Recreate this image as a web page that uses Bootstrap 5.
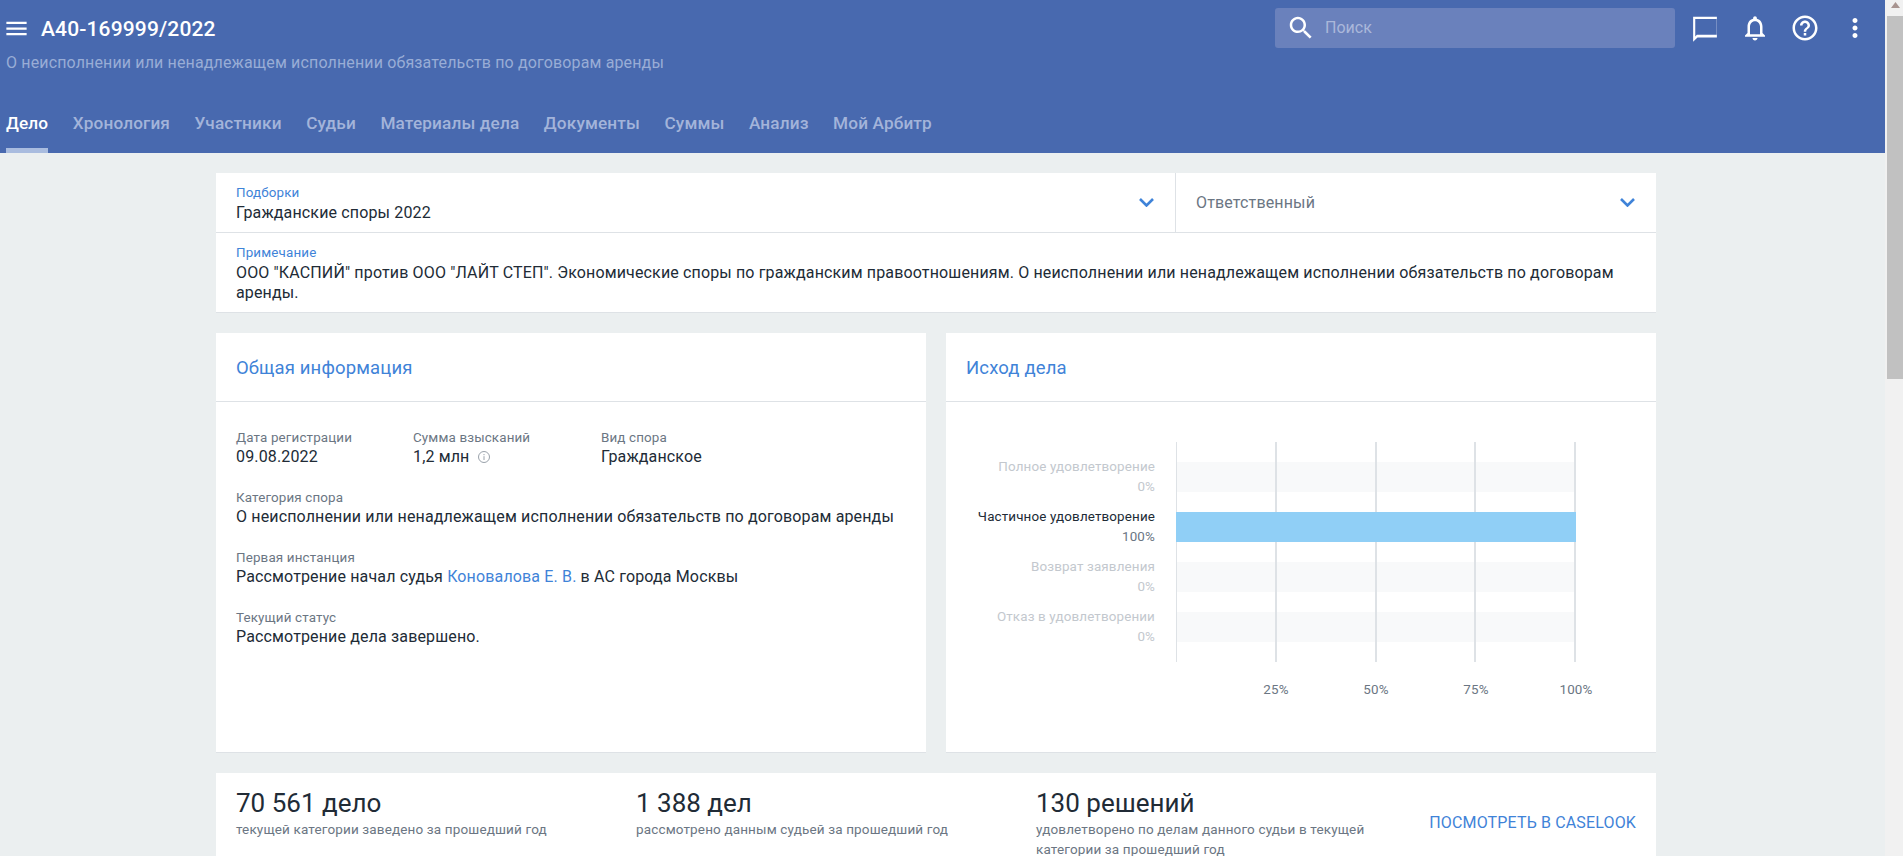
<!DOCTYPE html>
<html lang="ru">
<head>
<meta charset="utf-8">
<title>А40-169999/2022</title>
<link href="https://cdn.jsdelivr.net/npm/bootstrap@5.3.0/dist/css/bootstrap.min.css" rel="stylesheet">
<style>
html,body{height:856px;overflow:hidden}
body{font-family:Roboto,"Noto Sans",sans-serif;background:#ebeff0;color:#212b36;font-size:16px;line-height:20px;letter-spacing:.009em}
.viewport{height:856px}
.page{flex:1 1 0;min-width:0;overflow:hidden}
.fake-bar{width:18px;background:#f1f1f1;flex:none}
.bar-arrow{height:14px}
.bar-arrow svg{display:block;margin:2px 0 0 6px}
.bar-thumb{height:363px;margin-left:2px;background:#c1c1c1}
.hdr{height:153px;background:#4869af;color:#fff}
.hdr-top{padding-top:8px;height:48px}
.menu-ico{margin:0 11px 0 3px;width:27px;height:27px;fill:#fff;flex:none}
.case-no{font-size:21px;font-weight:500;line-height:28px;margin:1px 0 0}
.srch{width:400px;height:40px;background:#6a81bc;border-radius:3px;padding-left:11px;margin-right:5px;color:#aab8da;font-size:16px}
.srch svg{width:30px;height:30px;fill:#fff;margin-right:9px}
.srch-input{background:transparent;border:0;outline:0;padding:0;color:#fff;font:inherit;flex:1;min-width:0}
.srch-input::placeholder{color:#aab8da;opacity:1}
.ico-btn{width:50px;height:40px;background:none;border:0;padding:0;display:flex;align-items:center;justify-content:center}
.ico-btn svg{width:30px;height:30px;fill:#fff}
.hdr-right{margin-right:5px}
.sub{margin:5px 0 0 6px;line-height:20px;color:#99add6}
.tabs{margin-top:auto;padding-left:6px;gap:24.500px}
.tab{display:block;font-size:17.200px;font-weight:500;line-height:24px;color:#a3b4da;padding-bottom:13px;border-bottom:5px solid transparent;text-decoration:none}
.tab.on{color:#fff;border-bottom-color:#a9bcdf}
.wrap{width:1440px;margin-left:216px;padding-top:20px}
.panel{background:#fff;border:0;border-radius:0;border-bottom:1px solid #dee2e6}
.pick{height:60px;border-bottom:1px solid #dee2e6}
.pick-a{flex:1 1 0;padding:9px 20px}
.pick-a .blue-lbl{line-height:21px}
.pick-b{width:481px;border-left:1px solid #dee2e6;padding:0 20px;color:#6b7683}
.pick-a,.pick-b{display:flex;align-items:center;justify-content:space-between}
.chev{width:15px;height:9px;fill:none;stroke:#3f83d8;stroke-width:2.6;flex:none;margin-right:1px}
.blue-lbl{font-size:13.400px;line-height:20px;color:#3f83d8}
.note{padding:9px 20px 9px}
.note .blue-lbl{line-height:21px}
.pair{--bs-gutter-x:20px;margin-top:20px}
.tall{height:420px}
.panel-h{height:69px;line-height:70px;padding:0 20px;border-bottom:1px solid #dee2e6;color:#3f83d8;font-size:18.500px;font-weight:400;margin:0}
.info{padding:27px 20px 0}
.lbl{font-size:13.400px;line-height:18px;color:#6b7683}
.infoblock{margin-bottom:22px}
.c1{width:177px}
.c2{width:188px}
.i-ico{width:14px;height:14px;margin-left:8px;vertical-align:-2px}
.info a,.link-blue{color:#3f83d8;text-decoration:none}
.chart{padding:40px 0 0 20px;font-size:13.400px}
.chart-grid{display:flex}
.names{width:189px;padding-top:14.500px;text-align:right}
.name-row{height:50px;line-height:20px;white-space:nowrap;color:#c3c8ce}
.name-row.act{color:#212b36}
.name-row.act .pc{color:#6b7683}
.plot{width:400px;height:220px;margin-left:21px;position:relative;border-left:1px solid #dee2e6;padding-top:20px;flex:none}
.band{height:30px;margin-bottom:20px;background:#f8f9fa}
.band.fill{background:#90cff6;position:relative;z-index:2;margin-left:-1px}
.grid-over{position:absolute;inset:0;display:grid;grid-template-columns:repeat(4,1fr)}
.grid-over i{border-right:2px solid #dee2e6;display:block}
.ticks{display:grid;grid-template-columns:repeat(4,100px);margin:18px 0 0 210px;color:#6b7683;text-align:center}
.ticks span{display:block;transform:translateX(50%)}
.stat{margin-top:20px;height:120px;padding:15px 20px 0}
.stat-col{width:400px;flex:none}
.stat-col.last{width:393px}
.num{font-size:26px;line-height:30px;margin:0;font-weight:400;letter-spacing:0}
.cap{font-size:13.500px;line-height:20px;color:#6b7683;margin:1px 0 0;width:340px}
.more{font-size:16px;color:#3f83d8;margin-left:auto;margin-top:25px;text-decoration:none;white-space:nowrap}
</style>
</head>
<body>
<div class="viewport d-flex">
<div class="page">
  <header class="hdr d-flex flex-column">
    <div class="hdr-top d-flex align-items-center">
      <svg class="menu-ico" viewBox="0 0 24 24"><path d="M3 18h18v-2H3v2zm0-5h18v-2H3v2zm0-7v2h18V6H3z"/></svg>
      <h1 class="case-no">А40-169999/2022</h1>
      <div class="hdr-right ms-auto d-flex align-items-center">
        <div class="srch d-flex align-items-center">
          <svg viewBox="0 0 24 24"><path d="M15.500 14h-.79l-.28-.27C15.410 12.590 16 11.110 16 9.500 16 5.910 13.090 3 9.500 3S3 5.910 3 9.500 5.910 16 9.500 16c1.610 0 3.090-.59 4.230-1.570l.27.28v.79l5 4.990L20.490 19l-4.990-5zm-6 0C7.010 14 5 11.990 5 9.500S7.010 5 9.500 5 14 7.010 14 9.500 11.990 14 9.500 14z"/></svg>
          <input class="srch-input" type="text" placeholder="Поиск">
        </div>
        <button class="ico-btn" type="button" aria-label="Чат"><svg viewBox="0 0 24 24"><path fill-rule="evenodd" d="M2.500 3h19v16.500H6L2.500 23V3zm1.700 1.700v14l1.300-1.300h15.800V4.700H4.200z"/></svg></button>
        <button class="ico-btn" type="button" aria-label="Уведомления"><svg viewBox="0 0 24 24"><path d="M12 22c1.100 0 2-.9 2-2h-4c0 1.100.9 2 2 2zm6-6v-5c0-3.070-1.630-5.640-4.500-6.320V4c0-.83-.67-1.500-1.500-1.500s-1.500.67-1.500 1.500v.68C7.640 5.360 6 7.920 6 11v5l-2 2v1h16v-1l-2-2zm-2 1H8v-6c0-2.480 1.510-4.500 4-4.500s4 2.020 4 4.500v6z"/></svg></button>
        <button class="ico-btn" type="button" aria-label="Справка"><svg viewBox="0 0 24 24"><path d="M11 18h2v-2h-2v2zm1-16C6.480 2 2 6.480 2 12s4.480 10 10 10 10-4.480 10-10S17.520 2 12 2zm0 18c-4.410 0-8-3.590-8-8s3.590-8 8-8 8 3.590 8 8-3.590 8-8 8zm0-14c-2.210 0-4 1.790-4 4h2c0-1.100.9-2 2-2s2 .9 2 2c0 2-3 1.750-3 5h2c0-2.250 3-2.500 3-5 0-2.210-1.790-4-4-4z"/></svg></button>
        <button class="ico-btn" type="button" aria-label="Ещё"><svg viewBox="0 0 24 24"><path d="M12 8c1.100 0 2-.9 2-2s-.9-2-2-2-2 .9-2 2 .9 2 2 2zm0 2c-1.100 0-2 .9-2 2s.9 2 2 2 2-.9 2-2-.9-2-2-2zm0 6c-1.100 0-2 .9-2 2s.9 2 2 2 2-.9 2-2-.9-2-2-2z"/></svg></button>
      </div>
    </div>
    <p class="sub">О неисполнении или ненадлежащем исполнении обязательств по договорам аренды</p>
    <nav class="tabs d-flex">
      <a class="tab on" href="#">Дело</a>
      <a class="tab" href="#">Хронология</a>
      <a class="tab" href="#">Участники</a>
      <a class="tab" href="#">Судьи</a>
      <a class="tab" href="#">Материалы дела</a>
      <a class="tab" href="#">Документы</a>
      <a class="tab" href="#">Суммы</a>
      <a class="tab" href="#">Анализ</a>
      <a class="tab" href="#">Мой Арбитр</a>
    </nav>
  </header>
  <main class="wrap">
    <section class="card panel">
      <div class="pick d-flex">
        <div class="pick-a">
          <div>
            <div class="blue-lbl">Подборки</div>
            <div>Гражданские споры 2022</div>
          </div>
          <svg class="chev" viewBox="0 0 15 9"><path d="M1 1l6.500 6.500L14 1"/></svg>
        </div>
        <div class="pick-b">
          <span>Ответственный</span>
          <svg class="chev" viewBox="0 0 15 9"><path d="M1 1l6.500 6.500L14 1"/></svg>
        </div>
      </div>
      <div class="note">
        <div class="blue-lbl">Примечание</div>
        <div>ООО "КАСПИЙ" против ООО "ЛАЙТ СТЕП". Экономические споры по гражданским правоотношениям. О неисполнении или ненадлежащем исполнении обязательств по договорам аренды.</div>
      </div>
    </section>
    <div class="row pair">
      <div class="col-6">
        <section class="card panel tall">
          <h2 class="panel-h">Общая информация</h2>
          <div class="info">
            <div class="d-flex infoblock">
              <div class="c1"><div class="lbl">Дата регистрации</div><div>09.08.2022</div></div>
              <div class="c2"><div class="lbl">Сумма взысканий</div><div>1,2 млн<svg class="i-ico" viewBox="0 0 14 14" fill="none" stroke="#9aa2ab"><circle cx="7" cy="7" r="5.500"/><path d="M7 6.200v3.800M7 4v1.200"/></svg></div></div>
              <div><div class="lbl">Вид спора</div><div>Гражданское</div></div>
            </div>
            <div class="infoblock"><div class="lbl">Категория спора</div><div>О неисполнении или ненадлежащем исполнении обязательств по договорам аренды</div></div>
            <div class="infoblock"><div class="lbl">Первая инстанция</div><div>Рассмотрение начал судья <a href="#">Коновалова Е. В.</a> в АС города Москвы</div></div>
            <div class="infoblock"><div class="lbl">Текущий статус</div><div>Рассмотрение дела завершено.</div></div>
          </div>
        </section>
      </div>
      <div class="col-6">
        <section class="card panel tall">
          <h2 class="panel-h">Исход дела</h2>
          <div class="chart">
            <div class="chart-grid">
              <div class="names">
                <div class="name-row"><div>Полное удовлетворение</div><div>0%</div></div>
                <div class="name-row act"><div>Частичное удовлетворение</div><div class="pc">100%</div></div>
                <div class="name-row"><div>Возврат заявления</div><div>0%</div></div>
                <div class="name-row"><div>Отказ в удовлетворении</div><div>0%</div></div>
              </div>
              <div class="plot">
                <div class="band"></div>
                <div class="band fill"></div>
                <div class="band"></div>
                <div class="band"></div>
                <div class="grid-over"><i></i><i></i><i></i><i></i></div>
              </div>
            </div>
            <div class="ticks"><span>25%</span><span>50%</span><span>75%</span><span>100%</span></div>
          </div>
        </section>
      </div>
    </div>
    <section class="card panel stat">
      <div class="d-flex">
        <div class="stat-col"><p class="num">70 561 дело</p><p class="cap">текущей категории заведено за прошедший год</p></div>
        <div class="stat-col"><p class="num">1 388 дел</p><p class="cap">рассмотрено данным судьей за прошедший год</p></div>
        <div class="stat-col last"><p class="num">130 решений</p><p class="cap">удовлетворено по делам данного судьи в текущей категории за прошедший год</p></div>
        <a class="more link-blue" href="#">ПОСМОТРЕТЬ В CASELOOK</a>
      </div>
    </section>
  </main>
</div>
<aside class="fake-bar">
  <div class="bar-arrow"><svg width="9" height="6" viewBox="0 0 9 6"><path d="M4.500 0L9 6H0z" fill="#a89490"/></svg></div>
  <div class="bar-thumb"></div>
</aside>
</div>
<script src="https://cdn.jsdelivr.net/npm/bootstrap@5.3.0/dist/js/bootstrap.bundle.min.js"></script>
</body>
</html>
